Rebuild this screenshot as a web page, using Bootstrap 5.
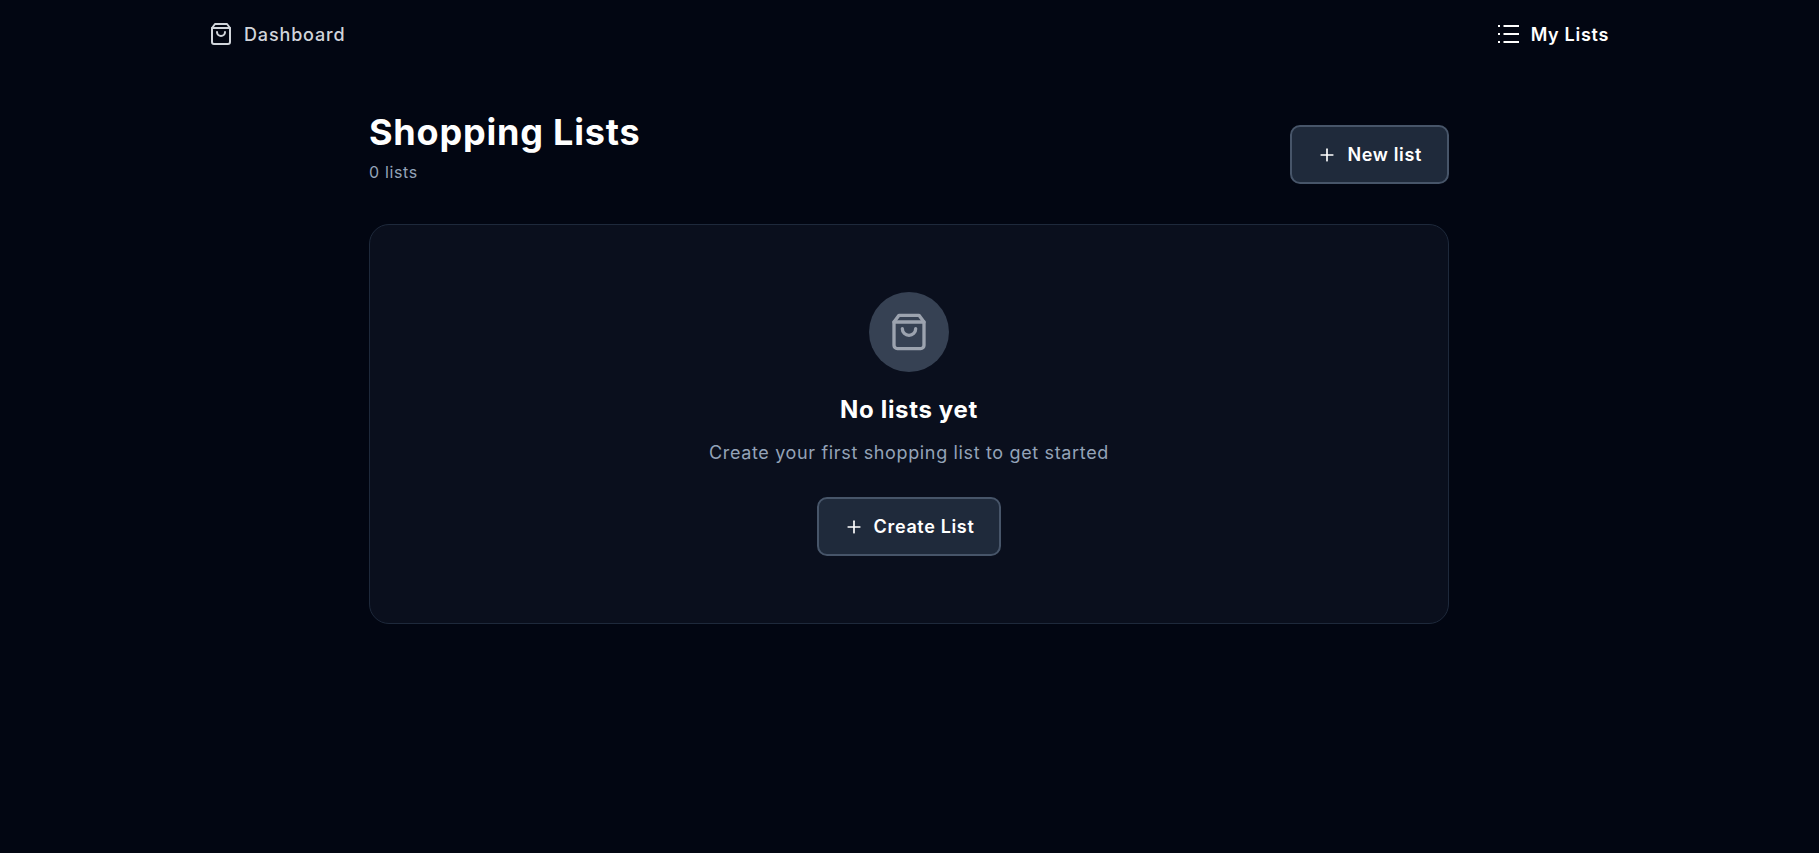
<!DOCTYPE html>
<html lang="en">
<head>
    <meta charset="UTF-8">
    <meta name="viewport" content="width=device-width, initial-scale=1.0">
    <link href="https://cdn.jsdelivr.net/npm/bootstrap@5.3.3/dist/css/bootstrap.min.css" rel="stylesheet">
    <script src="https://cdn.jsdelivr.net/npm/bootstrap@5.3.3/dist/js/bootstrap.bundle.min.js"></script>
    <title>Shopping Lists</title>
    <style>
        body{
            min-height: 100vh;
            padding-right: 1px;
            background: #020612;
            font-family: Inter, "Liberation Sans", sans-serif;
            color: #fff;
        }
        .top-nav{width: 1400px; height: 68px; margin: 0 auto;}
        .nav-item-link{font-size: 18px; font-weight: 500; letter-spacing: .85px; gap: 10px; text-decoration: none;}
        .dash-link{color: #d1d5db; gap: 11px;}
        .lists-link{color: #fff; font-weight: 600; letter-spacing: .7px;}
        .page-wrap{width: 1080px; margin: 0 auto; padding-top: 44px;}
        .page-title{font-size: 36px; line-height: 40px; font-weight: 700; letter-spacing: .8px; margin: 0 0 8px;}
        .page-sub{font-size: 16px; line-height: 24px; letter-spacing: .65px; color: #94a3b8; margin: 0;}
        .head-row{margin-bottom: 40px;}
        .slate-btn{
            background: #1f2a3b;
            border: 2px solid #475569;
            border-radius: 10px;
            color: #fff;
            font-size: 18px;
            font-weight: 600;
            letter-spacing: .65px;
            height: 59px;
            padding: 0 25px;
            gap: 10px;
        }
        .slate-btn:hover{background: #1f2a3b; border-color: #475569; color: #fff;}
        .empty-box{
            height: 400px;
            background: #0a0f1d;
            border: 1px solid #1e293b;
            border-radius: 20px;
            padding-top: 67px;
        }
        .icon-circle{width: 80px; height: 80px; background: #364153; border-radius: 50%; color: #9ca3af; margin-bottom: 22px;}
        .empty-title{font-size: 24px; line-height: 32px; font-weight: 700; letter-spacing: .65px; margin: 0 0 13px;}
        .empty-sub{font-size: 18px; line-height: 28px; letter-spacing: .65px; color: #94a3b8; margin: 0 0 30px;}
    </style>
</head>
<body>
    <!-- nav -->
    <nav class="top-nav d-flex align-items-center justify-content-between">
        <a href="#" class="nav-item-link dash-link d-flex align-items-center">
            <svg width="24" height="24" viewBox="0 0 24 24" fill="none" stroke="currentColor" stroke-width="2" stroke-linecap="round" stroke-linejoin="round"><path d="M6 2 3 6v14a2 2 0 0 0 2 2h14a2 2 0 0 0 2-2V6l-3-4Z"/><path d="M3 6h18"/><path d="M16 10a4 4 0 0 1-8 0"/></svg>
            Dashboard
        </a>
        <a href="#" class="nav-item-link lists-link d-flex align-items-center">
            <svg width="24" height="24" viewBox="0 0 24 24" fill="none" stroke="currentColor" stroke-width="2"><path d="M6.5 4H22"/><path d="M6.5 12H22"/><path d="M6.5 20H22"/><path d="M1 4h2"/><path d="M1 12h2"/><path d="M1 20h2"/></svg>
            My Lists
        </a>
    </nav>

    <main class="page-wrap">
        <div class="head-row d-flex align-items-end justify-content-between">
            <div>
                <h1 class="page-title">Shopping Lists</h1>
                <p class="page-sub">0 lists</p>
            </div>
            <button type="button" class="btn slate-btn d-flex align-items-center">
                <svg width="20" height="20" viewBox="0 0 24 24" fill="none" stroke="currentColor" stroke-width="2" stroke-linecap="round" stroke-linejoin="round"><path d="M5 12h14"/><path d="M12 5v14"/></svg>
                New list
            </button>
        </div>

        <div class="empty-box d-flex flex-column align-items-center">
            <div class="icon-circle d-flex align-items-center justify-content-center">
                <svg width="40" height="40" viewBox="0 0 24 24" fill="none" stroke="currentColor" stroke-width="2" stroke-linecap="round" stroke-linejoin="round"><path d="M6 2 3 6v14a2 2 0 0 0 2 2h14a2 2 0 0 0 2-2V6l-3-4Z"/><path d="M3 6h18"/><path d="M16 10a4 4 0 0 1-8 0"/></svg>
            </div>
            <h2 class="empty-title">No lists yet</h2>
            <p class="empty-sub">Create your first shopping list to get started</p>
            <button type="button" class="btn slate-btn d-flex align-items-center">
                <svg width="20" height="20" viewBox="0 0 24 24" fill="none" stroke="currentColor" stroke-width="2" stroke-linecap="round" stroke-linejoin="round"><path d="M5 12h14"/><path d="M12 5v14"/></svg>
                Create List
            </button>
        </div>
    </main>
</body>
</html>
